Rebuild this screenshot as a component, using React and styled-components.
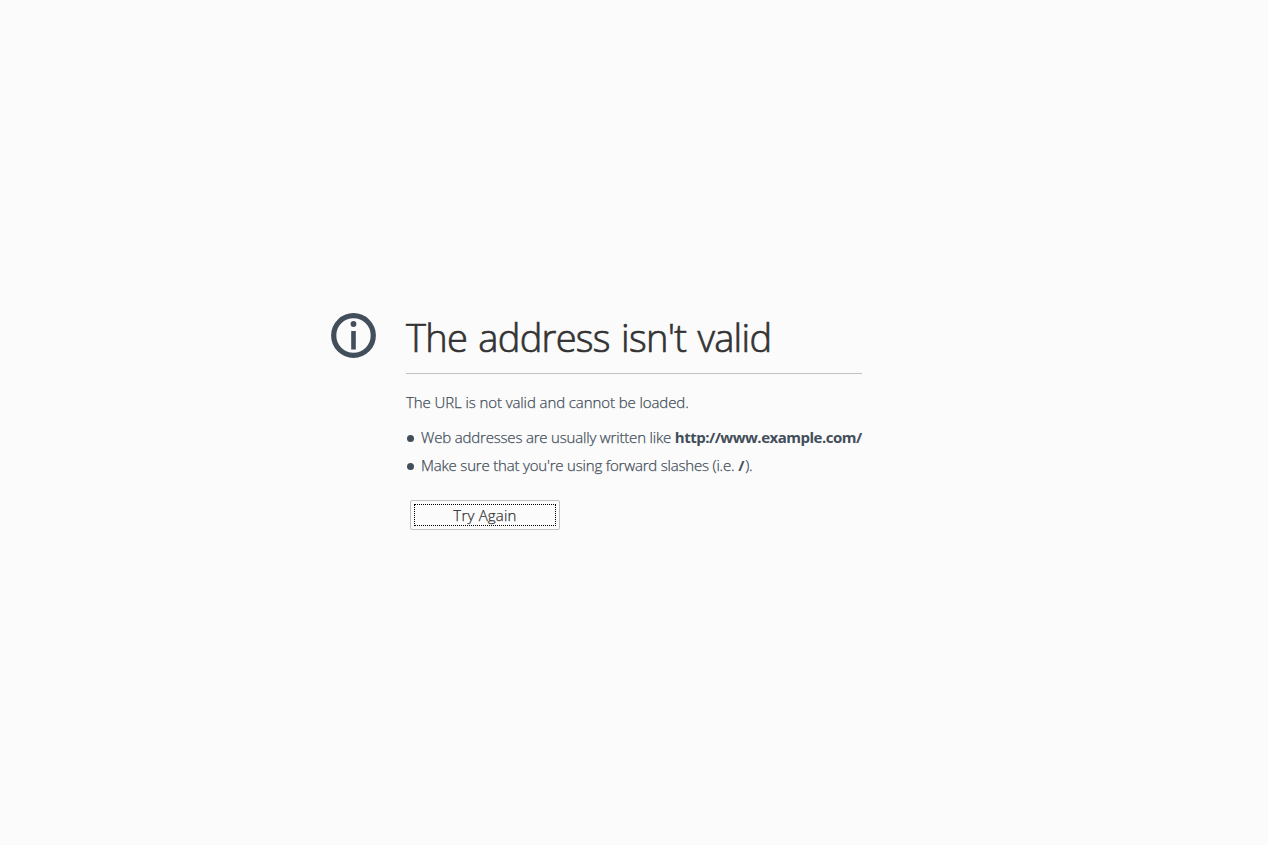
import React from "react";
import styled, { createGlobalStyle } from "styled-components";

const GlobalStyle = createGlobalStyle`
  * { box-sizing: border-box; }
  body {
    margin: 0;
    background: #fbfbfb;
    color: #424e5a;
    font-family: "Open Sans", "Noto Sans", sans-serif;
    font-size: 15px;
    font-weight: 300;
    -webkit-text-stroke: 0.25px;
  }
`;

const Page = styled.main`
  min-height: 100vh;
  display: flex;
  align-items: flex-start;
  gap: 29px;
  padding: 312px 0 0 330px;
`;

const InfoIcon = styled.svg`
  flex: none;
  width: 47px;
  height: 47px;
`;

const Content = styled.div`
  width: 456px;
  white-space: nowrap;
`;

const Title = styled.h1`
  height: 62px;
  margin: 0;
  border-bottom: 1px solid #c1c1c1;
  color: #333;
  font-size: 38px;
  font-weight: 300;
  line-height: 51px;
  letter-spacing: -0.7px;
  word-spacing: 2px;
  -webkit-text-stroke: 0.7px;
`;

const Line = styled.span`
  letter-spacing: ${(p) => p.$spacing};
`;

const Address = styled.b`
  font-weight: 700;
  letter-spacing: ${(p) => p.$spacing};
  -webkit-text-stroke: 0;
`;

const Description = styled.p`
  margin: 17px 0 11px;
  line-height: 22px;
`;

const Tips = styled.ul`
  list-style: none;
  margin: 0;
  padding: 0;
`;

const Tip = styled.li`
  display: flex;
  align-items: flex-start;
  height: 28px;
  padding-left: 1px;
  line-height: 26px;

  &::before {
    content: "";
    flex: none;
    width: 7px;
    height: 7px;
    margin: 11px 7px 0 0;
    border-radius: 50%;
    background: #424e5a;
  }
`;

const Button = styled.button`
  display: block;
  width: 150px;
  height: 30px;
  margin: 20px 0 0 4px;
  padding: 3px;
  border: 1px solid #c1c1c1;
  border-radius: 2px;
  background: #fbfbfb;
  color: #333;
  font: inherit;
`;

const FocusRing = styled.span`
  display: block;
  height: 22px;
  border: 1px dotted #000;
  line-height: 21px;
  letter-spacing: 0.2px;
`;

export default function App() {
  return (
    <>
      <GlobalStyle />
      <Page>
        <InfoIcon viewBox="0 0 47 47" aria-hidden="true">
          <circle cx="23.5" cy="23.5" r="19.8" fill="none" stroke="#424e5a" strokeWidth="5.2" />
          <circle cx="23.5" cy="12" r="2.9" fill="#424e5a" />
          <rect x="21.2" y="19" width="4.6" height="18.5" fill="#424e5a" />
        </InfoIcon>
        <Content>
          <Title>The address isn't valid</Title>
          <Description>
            <Line $spacing="-0.09px">The URL is not valid and cannot be loaded.</Line>
          </Description>
          <Tips>
            <Tip>
              <Line $spacing="-0.18px">
                Web addresses are usually written like <Address $spacing="-0.5px">http://www.example.com/</Address>
              </Line>
            </Tip>
            <Tip>
              <Line $spacing="-0.19px">
                Make sure that you're using forward slashes (i.e. <Address $spacing="0.8px">/</Address>).
              </Line>
            </Tip>
          </Tips>
          <Button type="button">
            <FocusRing>Try Again</FocusRing>
          </Button>
        </Content>
      </Page>
    </>
  );
}
